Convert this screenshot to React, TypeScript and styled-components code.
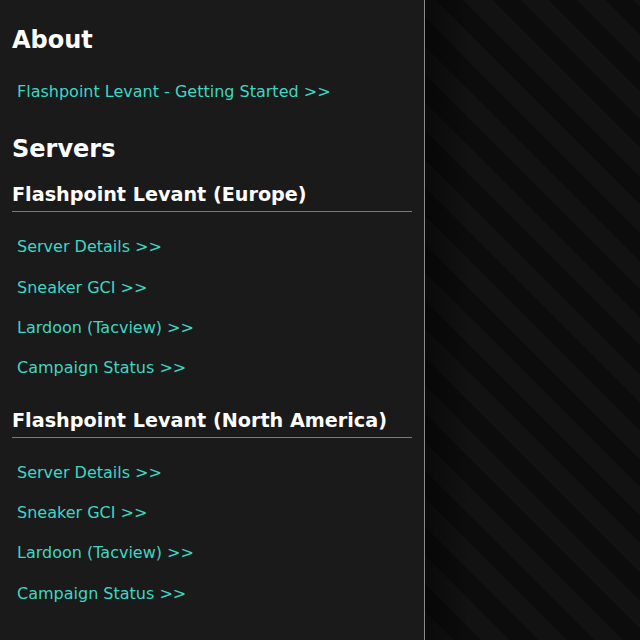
import React from "react";
import styled, { createGlobalStyle } from "styled-components";

const Global = createGlobalStyle`
  html, body { margin: 0; padding: 0; height: 100%; background: #0b0b0b; }
  #root { height: 100%; }
  * { box-sizing: border-box; }
`;

const Page = styled.div`
  display: flex;
  height: 100vh;
  font-family: "DejaVu Sans", "Liberation Sans", sans-serif;
`;

const Panel = styled.main`
  width: 425px;
  flex: none;
  background: #1a1a1a;
  border-right: 1px solid #8a8a8a;
  padding: 26px 12px 0 12px;
  overflow: hidden;
`;

const Backdrop = styled.div`
  flex: 1;
  background:
    linear-gradient(90deg, rgba(0, 0, 0, 0.45) 0px, rgba(0, 0, 0, 0) 45px),
    repeating-linear-gradient(
      45deg,
      #121212 0px,
      #121212 20px,
      #0c0c0c 20px,
      #0c0c0c 40px
    );
`;

const Title = styled.h1<{ $gap: number }>`
  margin: ${(p) => p.$gap}px 0 0 0;
  font-size: 24px;
  line-height: 28px;
  font-weight: bold;
  color: #ffffff;
`;

const ServerTitle = styled.h2<{ $gap: number }>`
  margin: ${(p) => p.$gap}px 0 0 0;
  padding-bottom: 4px;
  font-size: 19.2px;
  line-height: 24px;
  font-weight: bold;
  color: #ffffff;
  border-bottom: 1px solid #7a7a7a;
`;

const LinkList = styled.ul<{ $gap: number }>`
  list-style: none;
  margin: ${(p) => p.$gap}px 0 0 0;
  padding: 0;
`;

const Item = styled.li`
  height: 40.33px;
  line-height: 40.33px;
`;

const Link = styled.a`
  display: inline-block;
  padding-left: 5px;
  font-size: 16px;
  color: #3fd6c4;
  text-decoration: none;
`;

const serverLinks = [
  "Server Details >>",
  "Sneaker GCI >>",
  "Lardoon (Tacview) >>",
  "Campaign Status >>",
];

const Links = ({ items, gap }: { items: string[]; gap: number }) => (
  <LinkList $gap={gap}>
    {items.map((t) => (
      <Item key={t}>
        <Link href="#">{t}</Link>
      </Item>
    ))}
  </LinkList>
);

export default function App() {
  return (
    <>
      <Global />
      <Page>
        <Panel>
          <Title $gap={0}>About</Title>
          <Links gap={18} items={["Flashpoint Levant - Getting Started >>"]} />
          <Title $gap={23}>Servers</Title>
          <ServerTitle $gap={20}>Flashpoint Levant (Europe)</ServerTitle>
          <Links gap={15} items={serverLinks} />
          <ServerTitle $gap={20}>Flashpoint Levant (North America)</ServerTitle>
          <Links gap={15} items={serverLinks} />
        </Panel>
        <Backdrop />
      </Page>
    </>
  );
}
